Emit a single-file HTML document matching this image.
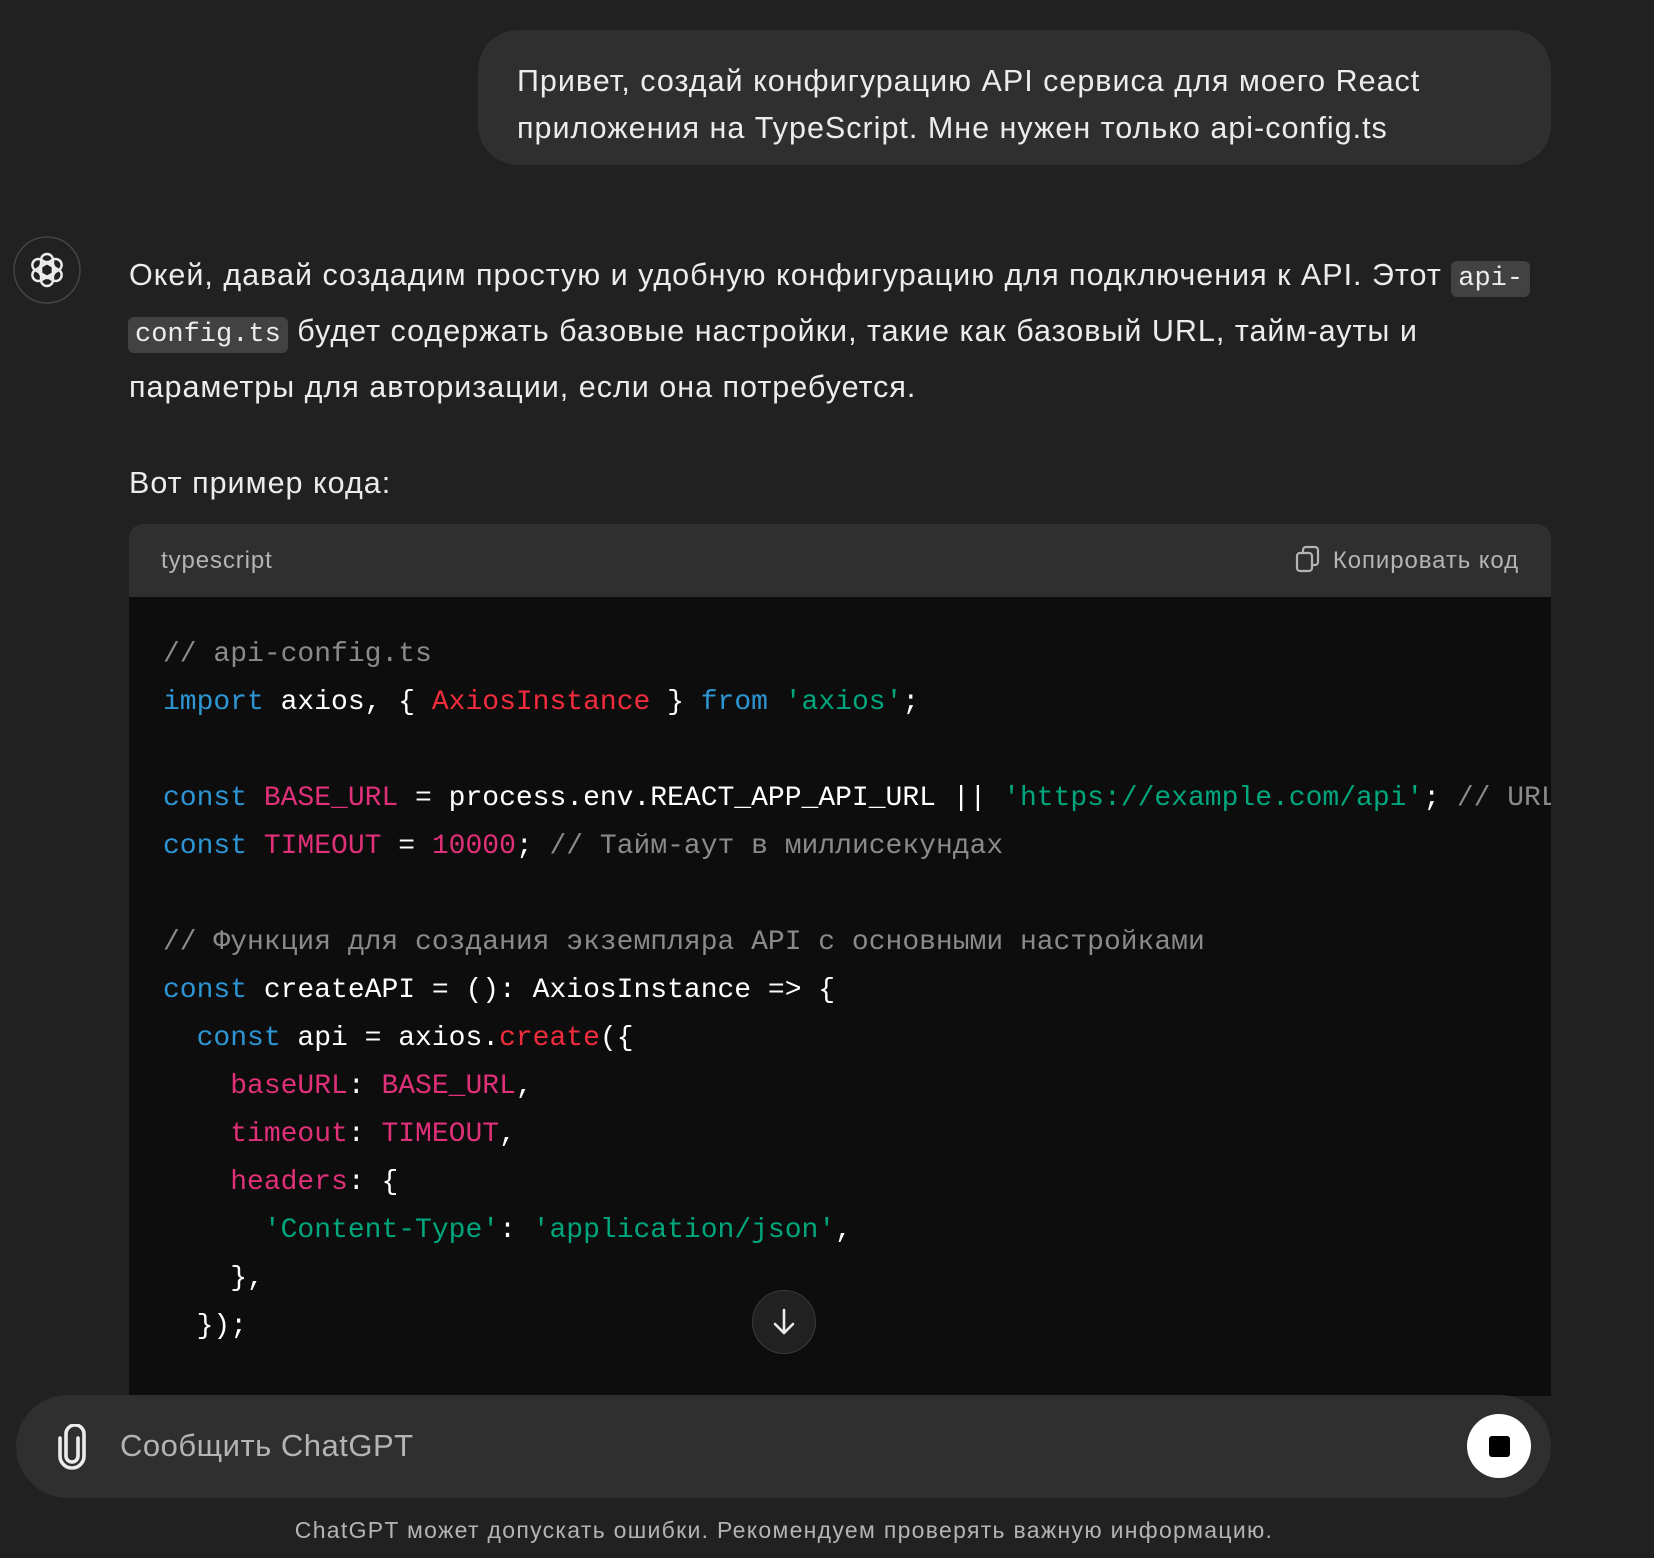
<!DOCTYPE html>
<html><head><meta charset="utf-8"><style>
*{margin:0;padding:0;box-sizing:border-box}
html,body{width:1654px;height:1558px;background:#212121;overflow:hidden;font-family:"Liberation Sans","DejaVu Sans",sans-serif;color:#ececec}
.abs{position:absolute}
.bubble{left:478px;top:30px;width:1073px;height:135px;background:#2f2f2f;border-radius:40px}
.bubble div{position:absolute;left:39px;font-size:30.5px;letter-spacing:1px;white-space:nowrap;line-height:48px}
.para div{position:absolute;left:129px;font-size:30.5px;letter-spacing:1px;white-space:nowrap;line-height:56px}
.ic{font-family:"Liberation Mono",monospace;font-size:27px;letter-spacing:0;background:#424242;border-radius:6px;padding:3px 7px}
.cb{left:129px;top:524px;width:1422px;height:872px;background:#0d0d0d;border-radius:14px 14px 0 0;overflow:hidden}
.ch{height:73px;background:#2f2f2f;position:relative;font-size:24px;letter-spacing:0.9px;color:#b4b4b4}
pre{position:absolute;left:34px;top:107px;font-family:"Liberation Mono",monospace;font-size:28px;line-height:48px;color:#fff;white-space:pre}
.c{color:#8a8a8a}.k{color:#2e95d3}.r{color:#f22c3d}.s{color:#00a67d}.p{color:#df3079}
.inp{left:16px;top:1395px;width:1535px;height:103px;background:#2f2f2f;border-radius:52px}
</style></head><body>
<div class="abs bubble">
<div style="top:51px;transform:translateY(-24px)">Привет, создай конфигурацию API сервиса для моего React</div>
<div style="top:98px;transform:translateY(-24px)">приложения на TypeScript. Мне нужен только api-config.ts</div>
</div>
<svg class="abs" style="left:13px;top:236px" width="68" height="68" viewBox="0 0 68 68">
<circle cx="34" cy="34" r="33" fill="none" stroke="#444" stroke-width="1.5"/>
<g fill="none" stroke="#ececec" stroke-width="2.4" transform="translate(34 34)">
<rect x="-6" y="-16" width="12" height="24" rx="6" transform="rotate(0)"/>
<rect x="-6" y="-16" width="12" height="24" rx="6" transform="rotate(60)"/>
<rect x="-6" y="-16" width="12" height="24" rx="6" transform="rotate(120)"/>
<rect x="-6" y="-16" width="12" height="24" rx="6" transform="rotate(180)"/>
<rect x="-6" y="-16" width="12" height="24" rx="6" transform="rotate(240)"/>
<rect x="-6" y="-16" width="12" height="24" rx="6" transform="rotate(300)"/>
</g></svg>
<div class="para">
<div style="top:247px">Окей, давай создадим простую и удобную конфигурацию для подключения к API. Этот <span class="ic">api-</span></div>
<div style="top:303px"><span class="ic" style="margin-left:-1px">config.ts</span> будет содержать базовые настройки, такие как базовый URL, тайм-ауты и</div>
<div style="top:359px">параметры для авторизации, если она потребуется.</div>
<div style="top:455px">Вот пример кода:</div>
</div>
<div class="abs cb">
<div class="ch"><span style="position:absolute;left:32px;top:23px">typescript</span>
<span style="position:absolute;right:32px;top:23px;padding-left:38px">
<svg style="position:absolute;left:0;top:-2px" width="26" height="28" viewBox="0 0 26 28" fill="none" stroke="#b4b4b4" stroke-width="2.2"><rect x="2" y="8" width="15" height="18" rx="3"/><path d="M8 8V5a3 3 0 0 1 3-3h9a3 3 0 0 1 3 3v12a3 3 0 0 1-3 3h-3"/></svg>Копировать код</span></div>
<pre><span class="c">// api-config.ts</span>
<span class="k">import</span> axios, { <span class="r">AxiosInstance</span> } <span class="k">from</span> <span class="s">'axios'</span>;

<span class="k">const</span> <span class="p">BASE_URL</span> = process.env.REACT_APP_API_URL || <span class="s">'https://example.com/api'</span>; <span class="c">// URL API</span>
<span class="k">const</span> <span class="p">TIMEOUT</span> = <span class="p">10000</span>; <span class="c">// Тайм-аут в миллисекундах</span>

<span class="c">// Функция для создания экземпляра API с основными настройками</span>
<span class="k">const</span> createAPI = (): AxiosInstance =&gt; {
  <span class="k">const</span> api = axios.<span class="r">create</span>({
    <span class="p">baseURL</span>: <span class="p">BASE_URL</span>,
    <span class="p">timeout</span>: <span class="p">TIMEOUT</span>,
    <span class="p">headers</span>: {
      <span class="s">'Content-Type'</span>: <span class="s">'application/json'</span>,
    },
  });</pre>
</div>
<div class="abs" style="left:752px;top:1290px;width:64px;height:64px;border-radius:50%;background:#212121;border:1px solid #3a3a3a"></div>
<svg class="abs" style="left:768px;top:1306px" width="32" height="32" viewBox="0 0 32 32" fill="none" stroke="#ececec" stroke-width="2.6" stroke-linecap="round" stroke-linejoin="round"><path d="M16 4v23M7 18l9 9 9-9"/></svg>
<div class="abs inp"></div>
<svg class="abs" style="left:56px;top:1424px" width="32" height="46" viewBox="0 0 32 46" fill="none" stroke="#ececec" stroke-width="3.6" stroke-linecap="round"><path d="M22 14v18a6 6 0 0 1-12 0V10a9 9 0 0 1 18 0v22a12 12 0 0 1-24 0V14"/></svg>
<div class="abs" style="left:120px;top:1428px;font-size:31px;letter-spacing:0.5px;color:#b4b4b4">Сообщить ChatGPT</div>
<div class="abs" style="left:1467px;top:1414px;width:64px;height:64px;border-radius:50%;background:#fff"></div>
<div class="abs" style="left:1489px;top:1436px;width:21px;height:21px;background:#000;border-radius:3px"></div>
<div class="abs" style="left:0;width:1568px;top:1517px;text-align:center;font-size:23px;letter-spacing:1.3px;color:#b4b4b4">ChatGPT может допускать ошибки. Рекомендуем проверять важную информацию.</div>
</body></html>
